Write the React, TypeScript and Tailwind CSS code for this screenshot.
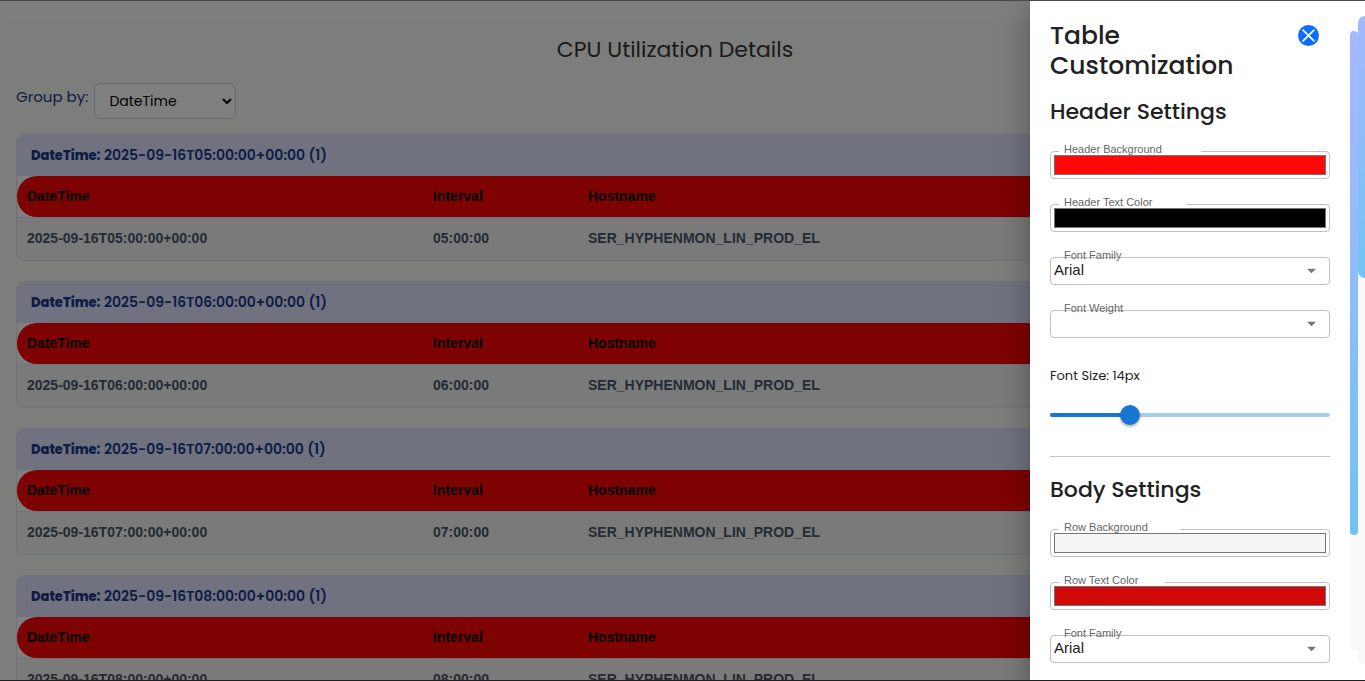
import { useState, type ReactNode } from 'react';

const groups = ['05:00:00', '06:00:00', '07:00:00', '08:00:00'];

function GroupCard({ time }: { time: string }) {
  const stamp = `2025-09-16T${time}+00:00`;
  return (
    <section className="overflow-hidden rounded-lg border border-[#dfe3f6] bg-white">
      <h2 className="h-[41px] bg-[#e0e4ff] px-[14px] pt-[10px] text-sm leading-5 font-semibold text-[#1e3a8a]">
        <strong className="text-[13px] font-extrabold">DateTime:</strong> {stamp} (1)
      </h2>
      <table className="w-full table-fixed border-separate border-spacing-0 text-left text-sm [font-family:Arial,'Liberation_Sans',sans-serif]">
        <thead>
          <tr className="h-[41px] font-bold text-black">
            <th className="w-[406px] rounded-l-[20px] bg-[#ff0505] px-[10px] pb-0.5">DateTime</th>
            <th className="w-[155px] bg-[#ff0505] px-[10px] pb-0.5">Interval</th>
            <th className="rounded-r-[20px] bg-[#ff0505] px-[10px] pb-0.5">Hostname</th>
          </tr>
        </thead>
        <tbody>
          <tr className="h-[43px] font-bold text-[#4b5568]">
            <td className="rounded-bl-lg border-t border-[#dfe3f6] bg-[#f5f5f5] px-[10px] pb-0.5">{stamp}</td>
            <td className="border-t border-[#dfe3f6] bg-[#f5f5f5] px-[10px] pb-0.5">{time}</td>
            <td className="rounded-br-lg border-t border-[#dfe3f6] bg-[#f5f5f5] px-[10px] pb-0.5">SER_HYPHENMON_LIN_PROD_EL</td>
          </tr>
        </tbody>
      </table>
    </section>
  );
}

function Field({ id, label, notch, children }: { id: string; label: string; notch?: string; children: ReactNode }) {
  return (
    <div className="relative h-7 rounded border border-[#c0c0c0] [font-family:Arial,'Liberation_Sans',sans-serif]">
      {notch && <span className={`absolute -top-px left-2 h-px bg-white ${notch}`} />}
      {children}
      <label htmlFor={id} className="pointer-events-none absolute -top-[10px] left-[13px] text-[11px] leading-[14px] text-[#666666]">
        {label}
      </label>
    </div>
  );
}

function ColorField({ id, label, notch, initial }: { id: string; label: string; notch: string; initial: string }) {
  const [color, setColor] = useState(initial);
  return (
    <Field id={id} label={label} notch={notch}>
      <div className="flex h-full p-[3px]">
        <input
          id={id}
          type="color"
          value={color}
          onChange={(e) => setColor(e.target.value)}
          className="h-full w-full appearance-none border-0 bg-transparent p-0 [&::-webkit-color-swatch]:rounded-none [&::-webkit-color-swatch]:border [&::-webkit-color-swatch]:border-[#767676] [&::-webkit-color-swatch-wrapper]:p-0"
        />
      </div>
    </Field>
  );
}

function SelectField({ id, label, initial, options }: { id: string; label: string; initial: string; options: string[] }) {
  const [value, setValue] = useState(initial);
  return (
    <Field id={id} label={label}>
      <select
        id={id}
        value={value}
        onChange={(e) => setValue(e.target.value)}
        className="block h-[25px] w-full appearance-none bg-transparent pl-[3px] text-[15px] text-[#212121] outline-none"
      >
        {options.map((o) => (
          <option key={o} value={o}>{o}</option>
        ))}
      </select>
      <svg viewBox="0 0 24 24" className="pointer-events-none absolute top-[2px] right-[7px] size-[21px] fill-[#757575]">
        <path d="M7 10l5 5 5-5z" />
      </svg>
    </Field>
  );
}

const families = ['Arial', 'Verdana', 'Georgia'];
const weights = ['', 'normal', 'bold'];

function Drawer() {
  const min = 10;
  const max = 24;
  const [size, setSize] = useState(14);
  return (
    <aside className="absolute inset-y-0 right-0 flex w-[335px] overflow-hidden bg-white text-[#212121] shadow-[0_8px_10px_-5px_rgba(0,0,0,0.2),0_16px_24px_2px_rgba(0,0,0,0.14),0_6px_30px_5px_rgba(0,0,0,0.12)]">
      <div className="min-w-0 flex-1 overflow-hidden p-5">
        <div className="flex items-start justify-between">
          <h2 className="text-[25px] leading-[30px] font-medium">Table Customization</h2>
          <button type="button" aria-label="Close" className="mt-1 mr-[11px] size-[21px] shrink-0">
            <svg viewBox="0 0 21 21" className="size-full">
              <circle cx="10.5" cy="10.5" r="10.5" fill="#0d6efd" />
              <path d="M5.1 5.1l10.8 10.8M15.9 5.1L5.1 15.9" stroke="#fff" strokeWidth="1.6" strokeLinecap="round" />
            </svg>
          </button>
        </div>
        <h3 className="mt-4 text-[22px] leading-[30px] font-medium">Header Settings</h3>
        <div className="mt-6 flex flex-col gap-[25px]">
          <ColorField id="header-bg" label="Header Background" notch="w-[142px]" initial="#ff0808" />
          <ColorField id="header-text" label="Header Text Color" notch="w-[127px]" initial="#000000" />
          <SelectField id="header-family" label="Font Family" initial="Arial" options={families} />
          <SelectField id="header-weight" label="Font Weight" initial="" options={weights} />
        </div>
        <label htmlFor="font-size" className="mt-7 block text-[13px] leading-5">Font Size: {size}px</label>
        <div className="relative mt-[19px] flex h-5 items-center">
          <div className="h-1 w-full overflow-hidden rounded-full bg-[#a7caed]">
            <div className="h-full bg-[#1976d2]" style={{ width: `${((size - min) / (max - min)) * 100}%` }} />
          </div>
          <input
            id="font-size"
            type="range"
            min={min}
            max={max}
            value={size}
            onChange={(e) => setSize(Number(e.target.value))}
            className="absolute inset-y-0 -inset-x-[10px] h-5 appearance-none bg-transparent [&::-webkit-slider-thumb]:size-5 [&::-webkit-slider-thumb]:appearance-none [&::-webkit-slider-thumb]:rounded-full [&::-webkit-slider-thumb]:bg-[#1976d2] [&::-webkit-slider-thumb]:shadow-[0_2px_3px_rgba(0,0,0,0.3)]"
          />
        </div>
        <hr className="mt-[31px] border-[#c4c4c4]" />
        <h3 className="mt-[18px] text-[22px] leading-[30px] font-medium">Body Settings</h3>
        <div className="mt-6 flex flex-col gap-[25px]">
          <ColorField id="row-bg" label="Row Background" notch="w-[121px]" initial="#f5f5f5" />
          <ColorField id="row-text" label="Row Text Color" notch="w-[106px]" initial="#d00808" />
          <SelectField id="row-family" label="Font Family" initial="Arial" options={families} />
        </div>
      </div>
      <div className="mt-[30px] mb-[30px] w-2 shrink-0 rounded-full bg-[#f9f9f9]">
        <div className="h-[81.5%] rounded-full bg-linear-to-b from-[#a5b8ff] to-[#70c2f5]" />
      </div>
      <div className="mt-[15px] mb-[15px] w-[7px] shrink-0 rounded-l-full bg-[#f9f9f9]">
        <div className="h-[40.4%] rounded-l-full bg-linear-to-b from-[#a5b8ff] to-[#70c2f5]" />
      </div>
    </aside>
  );
}

export default function App() {
  return (
    <div className="relative h-screen overflow-hidden border-t border-b border-t-[#434a50] border-b-[#202124] bg-[#fffdfe] [font-family:Poppins,Inter,sans-serif]">
      <main className="mt-5 mr-[15px] rounded-lg bg-[#f9fcf9] px-4 pt-3">
        <h1 className="text-center text-[22px] leading-[34px] font-normal text-[#333333]">CPU Utilization Details</h1>
        <div className="mt-4 flex items-start gap-1.5">
          <label htmlFor="group-by" className="pt-1 text-[15px] leading-5 text-[#1e3a8a]">Group by:</label>
          <select
            id="group-by"
            defaultValue="DateTime"
            className="h-9 w-[142px] rounded-md border border-[#cfd4ea] bg-white px-[10px] text-[14px] text-black"
          >
            <option>DateTime</option>
            <option>Interval</option>
            <option>Hostname</option>
          </select>
        </div>
        <div className="mt-[15px] flex flex-col gap-5">
          {groups.map((time) => (
            <GroupCard key={time} time={time} />
          ))}
        </div>
      </main>
      <div className="absolute inset-0 bg-black/50" />
      <Drawer />
    </div>
  );
}
